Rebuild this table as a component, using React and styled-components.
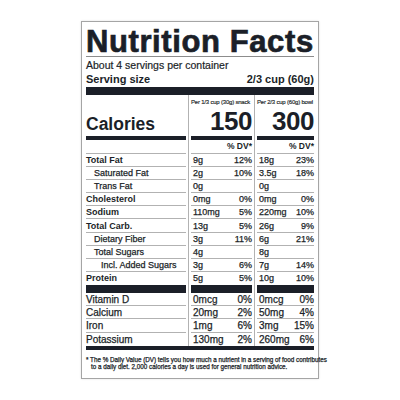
import React from 'react';
import styled, { createGlobalStyle } from 'styled-components';

const INK = '#1b1f28';
const RULE = '#b2b2b2';

const GlobalStyle = createGlobalStyle`
  html, body { margin: 0; padding: 0; background: #fff; }
  body { font-family: "Liberation Sans", Arial, sans-serif; color: ${INK}; }
`;

const Page = styled.div`
  width: 400px;
  height: 400px;
  box-sizing: border-box;
  padding-top: 21px;
  display: flex;
  justify-content: center;
  align-items: flex-start;
  background: #fff;
`;

const Label = styled.section`
  width: 238px;
  box-sizing: border-box;
  border: 1px solid #a5a5a5;
  box-shadow: 0 0 2px rgba(0, 0, 0, 0.12);
  padding: 0 4px;
  background: #fff;
  display: flex;
  flex-direction: column;
`;

const Title = styled.h1`
  margin: 0;
  padding-top: 5px;
  font-size: 31px;
  line-height: 29px;
  font-weight: 700;
  letter-spacing: 0.6px;
  -webkit-text-stroke: 0.7px ${INK};
  white-space: nowrap;
`;

const ThinRule = styled.div`
  height: 1px;
  background: #8c8c8c;
`;

const Servings = styled.div`
  padding-top: 2px;
  font-size: 10.5px;
  line-height: 12px;
  -webkit-text-stroke: 0.2px ${INK};
`;

const ServingRow = styled.div`
  display: flex;
  justify-content: space-between;
  margin-top: 1.5px;
  font-size: 11px;
  line-height: 13px;
  font-weight: 700;
`;

const Bar = styled.div`
  height: ${(p) => p.$h}px;
  margin-top: ${(p) => p.$mt || 0}px;
  background: ${INK};
`;

const Columns = styled.div`
  display: flex;
  align-items: stretch;
`;

const Divider = styled.div`
  width: 1px;
  margin: 0 2px;
  background: ${RULE};
`;

const Column = styled.div`
  display: flex;
  flex-direction: column;
  ${(p) => (p.$w ? `width: ${p.$w}px; flex: none;` : 'flex: 1; min-width: 0;')}
`;

const Header = styled.div`
  height: 41px;
  display: flex;
  flex-direction: column;
  justify-content: ${(p) => (p.$main ? 'flex-end' : 'space-between')};
`;

const HeadNote = styled.div`
  margin-top: 3px;
  font-size: 6px;
  line-height: 8px;
  white-space: nowrap;
  letter-spacing: -0.2px;
  -webkit-text-stroke: 0.15px ${INK};
`;

const BigNum = styled.div`
  margin-bottom: 2px;
  font-size: 26px;
  line-height: 26px;
  font-weight: 700;
  text-align: right;
  letter-spacing: -0.5px;
`;

const Calories = styled.div`
  margin-bottom: 3px;
  font-size: 17.5px;
  line-height: 18px;
  font-weight: 700;
`;

const DVRow = styled.div`
  height: 14px;
  box-sizing: border-box;
  display: flex;
  align-items: center;
  justify-content: flex-end;
  padding-bottom: 2px;
  border-bottom: 1px solid ${RULE};
  font-size: 8.5px;
  font-weight: 700;
`;

const Row = styled.div`
  height: ${(p) => p.$h}px;
  box-sizing: border-box;
  display: flex;
  align-items: center;
  justify-content: space-between;
  border-bottom: ${(p) => (p.$last ? 'none' : `1px solid ${RULE}`)};
  font-size: ${(p) => (p.$vit ? 10 : 9)}px;
  white-space: nowrap;
`;

const Name = styled.span`
  padding-left: ${(p) => [0, 8, 15][p.$indent || 0]}px;
  font-weight: ${(p) => (p.$bold ? 700 : 400)};
  -webkit-text-stroke: ${(p) => (p.$bold ? 0 : 0.25)}px ${INK};
`;

const Amount = styled.span`
  padding-left: 2px;
  -webkit-text-stroke: 0.25px ${INK};
`;

const Pct = styled.span`
  text-align: right;
  -webkit-text-stroke: 0.25px ${INK};
`;

const Footnote = styled.div`
  padding: 6px 0 7px;
  font-size: 6.3px;
  line-height: 7.5px;
  -webkit-text-stroke: 0.25px ${INK};
  white-space: nowrap;
`;

const FootLine = styled.div`
  padding-left: ${(p) => (p.$indent ? 5 : 0)}px;
`;

const ROW_H = 13.1;
const VIT_H = 13.25;

const macros = [
  { name: 'Total Fat', bold: true, a: '9g', ap: '12%', b: '18g', bp: '23%' },
  { name: 'Saturated Fat', indent: 1, a: '2g', ap: '10%', b: '3.5g', bp: '18%' },
  { name: 'Trans Fat', indent: 1, a: '0g', ap: '', b: '0g', bp: '' },
  { name: 'Cholesterol', bold: true, a: '0mg', ap: '0%', b: '0mg', bp: '0%' },
  { name: 'Sodium', bold: true, a: '110mg', ap: '5%', b: '220mg', bp: '10%' },
  { name: 'Total Carb.', bold: true, a: '13g', ap: '5%', b: '26g', bp: '9%' },
  { name: 'Dietary Fiber', indent: 1, a: '3g', ap: '11%', b: '6g', bp: '21%' },
  { name: 'Total Sugars', indent: 1, a: '4g', ap: '', b: '8g', bp: '' },
  { name: 'Incl. Added Sugars', indent: 2, a: '3g', ap: '6%', b: '7g', bp: '14%' },
  { name: 'Protein', bold: true, a: '5g', ap: '5%', b: '10g', bp: '10%' },
];

const vitamins = [
  { name: 'Vitamin D', a: '0mcg', ap: '0%', b: '0mcg', bp: '0%' },
  { name: 'Calcium', a: '20mg', ap: '2%', b: '50mg', bp: '4%' },
  { name: 'Iron', a: '1mg', ap: '6%', b: '3mg', bp: '15%' },
  { name: 'Potassium', a: '130mg', ap: '2%', b: '260mg', bp: '6%' },
];

function ValueColumn({ width, note, total, amt, pct }) {
  return (
    <Column $w={width}>
      <Header>
        <HeadNote>{note}</HeadNote>
        <BigNum>{total}</BigNum>
      </Header>
      <Bar $h={4} />
      <DVRow>% DV*</DVRow>
      {macros.map((r, i) => (
        <Row key={r.name} $h={ROW_H} $last={i === macros.length - 1}>
          <Amount>{r[amt]}</Amount>
          <Pct>{r[pct]}</Pct>
        </Row>
      ))}
      <Bar $h={8} />
      {vitamins.map((r, i) => (
        <Row key={r.name} $h={VIT_H} $vit $last={i === vitamins.length - 1}>
          <Amount>{r[amt]}</Amount>
          <Pct>{r[pct]}</Pct>
        </Row>
      ))}
    </Column>
  );
}

export default function App() {
  return (
    <>
      <GlobalStyle />
      <Page>
        <Label>
          <Title>Nutrition Facts</Title>
          <ThinRule />
          <Servings>About 4 servings per container</Servings>
          <ServingRow>
            <span>Serving size</span>
            <span>2/3 cup (60g)</span>
          </ServingRow>
          <Bar $h={8} $mt={1.5} />
          <Columns>
            <Column>
              <Header $main>
                <Calories>Calories</Calories>
              </Header>
              <Bar $h={4} />
              <DVRow />
              {macros.map((r, i) => (
                <Row key={r.name} $h={ROW_H} $last={i === macros.length - 1}>
                  <Name $bold={r.bold} $indent={r.indent}>{r.name}</Name>
                </Row>
              ))}
              <Bar $h={8} />
              {vitamins.map((r, i) => (
                <Row key={r.name} $h={VIT_H} $vit $last={i === vitamins.length - 1}>
                  <Name>{r.name}</Name>
                </Row>
              ))}
            </Column>
            <Divider />
            <ValueColumn width={61} note="Per 1/3 cup (30g) snack" total="150" amt="a" pct="ap" />
            <Divider />
            <ValueColumn width={57} note="Per 2/3 cup (60g) bowl" total="300" amt="b" pct="bp" />
          </Columns>
          <Bar $h={4} />
          <Footnote>
            <FootLine>* The % Daily Value (DV) tells you how much a nutrient in a serving of food contributes</FootLine>
            <FootLine $indent>to a daily diet. 2,000 calories a day is used for general nutrition advice.</FootLine>
          </Footnote>
        </Label>
      </Page>
    </>
  );
}
